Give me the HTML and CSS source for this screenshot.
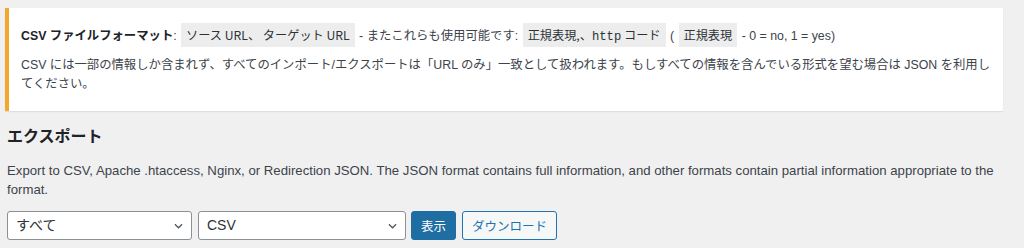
FILE: index.html
```html
<!DOCTYPE html>
<html lang="ja">
<head>
<meta charset="utf-8">
<link rel="stylesheet" href="styles.css">
</head>
<body>
<div class="wrap">
  <div class="notice">
    <p><strong>CSV ファイルフォーマット</strong>: <code>ソース URL、 ターゲット URL</code> - またこれらも使用可能です: <code>正規表現,、<span class="mono">http</span> コード</code> ( <code>正規表現</code> - 0 = no, 1 = yes)</p>
    <p>CSV には一部の情報しか含まれず、すべてのインポート/エクスポートは「URL のみ」一致として扱われます。もしすべての情報を含んでいる形式を望む場合は JSON を利用してください。</p>
  </div>
  <h2 class="title">エクスポート</h2>
  <p class="desc">Export to CSV, Apache .htaccess, Nginx, or Redirection JSON. The JSON format contains full information, and other formats contain partial information appropriate to the format.</p>
  <div class="controls">
    <div class="select sel-1"><span>すべて</span><svg viewBox="0 0 10 6" width="9" height="6"><path d="M1 1 L5 5 L9 1" fill="none" stroke="#50575e" stroke-width="1.4"/></svg></div>
    <div class="select sel-2"><span>CSV</span><svg viewBox="0 0 10 6" width="9" height="6"><path d="M1 1 L5 5 L9 1" fill="none" stroke="#50575e" stroke-width="1.4"/></svg></div>
    <button class="btn btn-primary">表示</button>
    <button class="btn btn-secondary">ダウンロード</button>
  </div>
</div>
</body>
</html>
```

FILE: styles.css
```css
* { box-sizing: border-box; }
html, body { margin: 0; padding: 0; }
body {
  background: #f0f0f1;
  color: #3c434a;
  font-family: -apple-system, "Helvetica Neue", "Liberation Sans", "Noto Sans CJK JP", sans-serif;
  font-size: 13px;
  line-height: 1.4;
}
.wrap {
  padding: 8px 21px 0 5px;
}
.notice {
  background: #fff;
  border-left: 4px solid #f3a72d;
  box-shadow: 0 1px 1px rgba(0,0,0,0.07);
  padding: 19px 8px 16px 12px;
  font-size: 12.35px;
}
.notice p {
  margin: 0;
  line-height: 19.5px;
}
.notice p:first-child { margin-bottom: 9px; }
.notice strong { color: #1d2327; font-weight: 700; }
code {
  font-family: "Noto Sans CJK JP", sans-serif;
  font-size: 12.2px;
  line-height: 1;
  background: #ededee;
  color: #2c3338;
  padding: 3px 5px 3px;
  margin: 0 1px;
}
.mono {
  font-family: "Liberation Mono", monospace;
}
.title {
  font-size: 16px;
  font-weight: 700;
  color: #1d2327;
  margin: 16px 0 0 2px;
  line-height: 1.3;
}
.desc {
  margin: 14px 0 0 2px;
  line-height: 19px;
  font-size: 13.2px;
}
.controls {
  display: flex;
  gap: 6px;
  margin: 12px 0 0 2px;
  align-items: center;
}
.select {
  height: 29px;
  background: #fff;
  border: 1px solid #8c8f94;
  border-radius: 3px;
  display: flex;
  align-items: center;
  justify-content: space-between;
  padding: 0 8px 0 8px;
  font-size: 14px;
  color: #2c3338;
}
.sel-1 { width: 185px; }
.sel-2 { width: 208px; }
.btn {
  height: 29px;
  border-radius: 3px;
  font-family: inherit;
  font-size: 12.5px;
  padding: 0 9px;
  border: 1px solid #2271b1;
}
.btn-primary {
  background: #1f6ea3;
  border-color: #1f6ea3;
  color: #fff;
  margin-left: -1px;
}
.btn-secondary {
  background: #f6f7f7;
  color: #2271b1;
}
```
